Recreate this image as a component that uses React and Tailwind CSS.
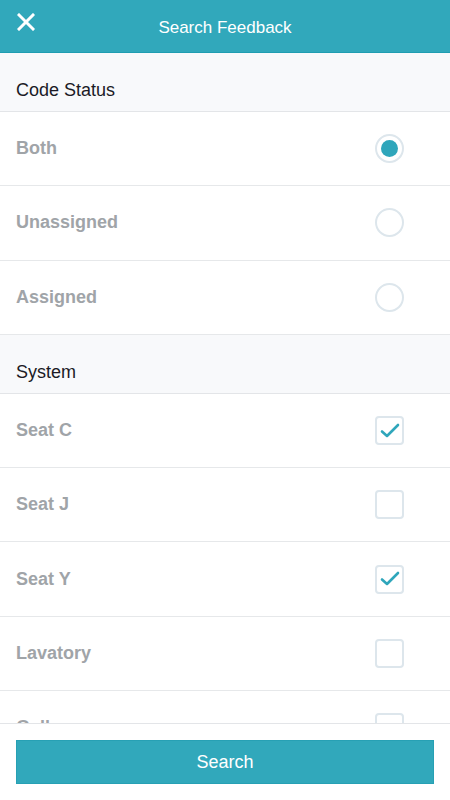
import React, { useState } from 'react';

const font = { fontFamily: '"Liberation Sans", Arial, sans-serif' };

const Radio = ({ checked }) => (
  <div className="w-[29px] h-[29px] rounded-full border-2 border-[#dde6ec] flex items-center justify-center">
    {checked && <div className="w-[17px] h-[17px] rounded-full bg-[#2fa6bb]" />}
  </div>
);

const Checkbox = ({ checked }) => (
  <div className="w-[29px] h-[29px] rounded-[4px] border-2 border-[#dde6ec] flex items-center justify-center">
    {checked && (
      <svg width="20" height="16" viewBox="0 0 20 16" fill="none">
        <path d="M2 8.5l5 4.5L18 2" stroke="#2fa6bb" strokeWidth="2.6" strokeLinecap="round" strokeLinejoin="round" />
      </svg>
    )}
  </div>
);

const SectionHeader = ({ title }) => (
  <div className="h-[59px] bg-[#f8f9fb] border-b border-[#e3e5e8] flex items-end px-4 pb-[7px] text-[18px] text-[#1b1b26]">
    {title}
  </div>
);

const Row = ({ label, children, onClick }) => (
  <div
    onClick={onClick}
    className="h-[74.3px] bg-white border-b border-[#e6e8ea] flex items-center justify-between pl-4 pr-[46px] cursor-pointer"
  >
    <span className="text-[18px] font-bold text-[#a0a4a8]">{label}</span>
    {children}
  </div>
);

const App = () => {
  const [status, setStatus] = useState('Both');
  const [systems, setSystems] = useState({ 'Seat C': true, 'Seat J': false, 'Seat Y': true, Lavatory: false, Galley: false });

  return (
    <div className="w-[450px] h-[800px] flex flex-col bg-white overflow-hidden" style={font}>
      <div className="h-[53px] shrink-0 bg-[#31a8bb] border-b border-[#1f9db1] flex items-center relative">
        <svg className="absolute left-[17px] top-[13px]" width="18" height="18" viewBox="0 0 18 18">
          <path d="M2 2l14 14M16 2L2 16" stroke="white" strokeWidth="3" strokeLinecap="square" />
        </svg>
        <div className="flex-1 text-center text-white text-[17px] pt-[4px]">Search Feedback</div>
      </div>

      <div className="flex-1 min-h-0 overflow-hidden">
        <SectionHeader title="Code Status" />
        {['Both', 'Unassigned', 'Assigned'].map((s) => (
          <Row key={s} label={s} onClick={() => setStatus(s)}>
            <Radio checked={status === s} />
          </Row>
        ))}
        <SectionHeader title="System" />
        {Object.keys(systems).map((s) => (
          <Row key={s} label={s} onClick={() => setSystems({ ...systems, [s]: !systems[s] })}>
            <Checkbox checked={systems[s]} />
          </Row>
        ))}
      </div>

      <div className="h-[77px] shrink-0 border-t border-[#e3e5e8] bg-white px-4 pt-4">
        <button className="w-full h-[44px] bg-[#31a8bb] border border-[#27a0b4] text-white text-[18px]">Search</button>
      </div>
    </div>
  );
};

export default App;
